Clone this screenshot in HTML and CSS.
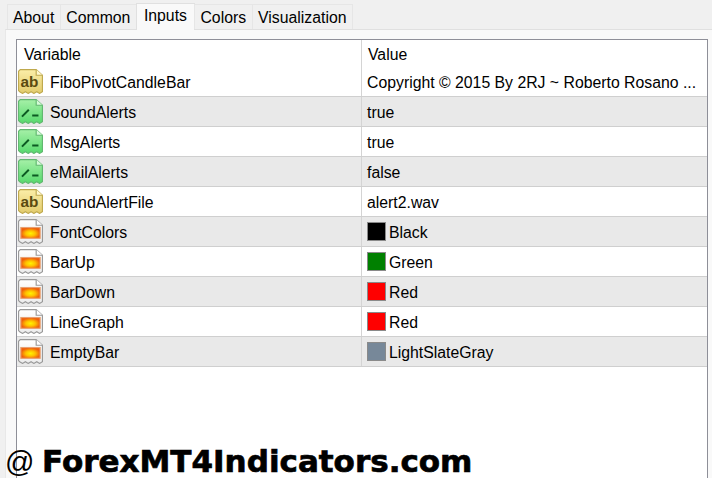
FILE: index.html
```html
<!DOCTYPE html>
<html lang="en">
<head>
<meta charset="utf-8">
<title>Inputs</title>
<link rel="stylesheet" href="styles.css">
</head>
<body>
<svg class="defs" width="0" height="0" aria-hidden="true">
  <defs>
    <linearGradient id="gy" x1="0" y1="0" x2="0" y2="1"><stop offset="0" stop-color="#fbeea8"/><stop offset="1" stop-color="#e2cb6c"/></linearGradient>
    <linearGradient id="gg" x1="0" y1="0" x2="0" y2="1"><stop offset="0" stop-color="#a6f0a8"/><stop offset="1" stop-color="#56d96c"/></linearGradient>
    <linearGradient id="gw" x1="0" y1="0" x2="0" y2="1"><stop offset="0" stop-color="#ffffff"/><stop offset="1" stop-color="#ececec"/></linearGradient>
    <radialGradient id="gf" cx=".5" cy=".55" r=".5"><stop offset="0" stop-color="#fff200"/><stop offset=".5" stop-color="#ffc000"/><stop offset="1" stop-color="#f0600c"/></radialGradient>
    <symbol id="i-text" viewBox="1 1 22 22">
      <path d="M3 1.5H17L22.5 6.5V21L20 22.5 17.5 21 15 22.5 12.5 21 10 22.5 7.5 21 5 22.5 2.5 21 1.5 20V3Z" fill="url(#gy)" stroke="#bfa94e"/>
      <path d="M17 1.5V6.5H22.5" fill="#fff8d0" stroke="#bfa94e"/>
      <text x="3.2" y="17" class="ab">ab</text>
    </symbol>
    <symbol id="i-bool" viewBox="1 1 22 22">
      <path d="M3 1.5H17L22.5 6.5V21L20 22.5 17.5 21 15 22.5 12.5 21 10 22.5 7.5 21 5 22.5 2.5 21 1.5 20V3Z" fill="url(#gg)" stroke="#62b870"/>
      <path d="M17 1.5V6.5H22.5" fill="#d6fbd8" stroke="#62b870"/>
      <path d="M4.5 16.5 10.5 10.5M13.5 15.5H19" fill="none" stroke="#0c5a22" stroke-width="1.8"/>
    </symbol>
    <symbol id="i-color" viewBox="1 1 22 22">
      <path d="M3 1.5H17L22.5 6.5V21L20 22.5 17.5 21 15 22.5 12.5 21 10 22.5 7.5 21 5 22.5 2.5 21 1.5 20V3Z" fill="url(#gw)" stroke="#999"/>
      <path d="M17 1.5V6.5H22.5" fill="#fff" stroke="#999"/>
      <rect x="3.5" y="8.5" width="17" height="9.5" fill="url(#gf)" stroke="#e8a070"/>
    </symbol>
  </defs>
</svg>

<nav class="tabs">
  <span class="tab">About</span>
  <span class="tab">Common</span>
  <span class="tab tab-active">Inputs</span>
  <span class="tab">Colors</span>
  <span class="tab">Visualization</span>
</nav>

<main class="panel">
  <section class="list">
    <header class="row head">
      <div class="cell var">Variable</div>
      <div class="cell val">Value</div>
    </header>
    <div class="row"><div class="cell var"><svg class="icon"><use href="#i-text"/></svg>FiboPivotCandleBar</div><div class="cell val">Copyright © 2015 By 2RJ ~ Roberto Rosano ...</div></div>
    <div class="row alt"><div class="cell var"><svg class="icon"><use href="#i-bool"/></svg>SoundAlerts</div><div class="cell val">true</div></div>
    <div class="row"><div class="cell var"><svg class="icon"><use href="#i-bool"/></svg>MsgAlerts</div><div class="cell val">true</div></div>
    <div class="row alt"><div class="cell var"><svg class="icon"><use href="#i-bool"/></svg>eMailAlerts</div><div class="cell val">false</div></div>
    <div class="row"><div class="cell var"><svg class="icon"><use href="#i-text"/></svg>SoundAlertFile</div><div class="cell val">alert2.wav</div></div>
    <div class="row alt"><div class="cell var"><svg class="icon"><use href="#i-color"/></svg>FontColors</div><div class="cell val"><span class="swatch black"></span>Black</div></div>
    <div class="row"><div class="cell var"><svg class="icon"><use href="#i-color"/></svg>BarUp</div><div class="cell val"><span class="swatch green"></span>Green</div></div>
    <div class="row alt"><div class="cell var"><svg class="icon"><use href="#i-color"/></svg>BarDown</div><div class="cell val"><span class="swatch red"></span>Red</div></div>
    <div class="row"><div class="cell var"><svg class="icon"><use href="#i-color"/></svg>LineGraph</div><div class="cell val"><span class="swatch red"></span>Red</div></div>
    <div class="row alt"><div class="cell var"><svg class="icon"><use href="#i-color"/></svg>EmptyBar</div><div class="cell val"><span class="swatch slate"></span>LightSlateGray</div></div>
  </section>
</main>

<div class="mark"><span class="at">@</span><span class="site">ForexMT4Indicators.com</span></div>
</body>
</html>
```

FILE: styles.css
```css
* { box-sizing: border-box; }
html, body { margin: 0; height: 100%; }
body {
  width: 712px;
  height: 478px;
  overflow: hidden;
  position: relative;
  background: #f0f0f0;
  font-family: "Liberation Sans", Arial, sans-serif;
  font-size: 15.8px;
  color: #000;
  display: flex;
  flex-direction: column;
}
.defs { position: absolute; }
.ab { font-family: "Liberation Sans", sans-serif; font-size: 13.5px; font-weight: 700; fill: #5a4a10; }

.tabs {
  height: 29px;
  padding: 0 0 0 6.5px;
  display: flex;
  align-items: flex-end;
  flex: none;
  position: relative;
  z-index: 1;
}
.tab {
  height: 25px;
  padding: 0 5.5px;
  line-height: 26px;
  background: #f0f0f0;
  border: 1px solid #e6e6e6;
  border-bottom: 0;
  margin-right: -1px;
  white-space: nowrap;
}
.tab-active {
  height: 27px;
  margin-bottom: -1px;
  padding: 0 7px;
  line-height: 23px;
  background: #f9f9f9;
  border-color: #e0e0e0;
}

.panel {
  flex: 1;
  margin-left: 5px;
  padding: 9px 4px 0 10px;
  background: #f9f9f9;
  border-top: 1px solid #e0e0e0;
  border-left: 1px solid #e8e8e8;
}
.list {
  height: 100%;
  background: #fff;
  border: 1px solid #8e8f98;
  border-bottom: 0;
}
.row {
  height: 30px;
  display: grid;
  grid-template-columns: 344px 1fr;
  border-bottom: 1px solid #cfcfcf;
}
.head { height: 27px; border-bottom: 0; }
.alt { background: #e9e9e9; }
.cell {
  display: flex;
  align-items: center;
  padding-top: 2px;
  white-space: nowrap;
}
.var { padding-left: 1px; }
.val { border-left: 1px solid #d4d4d4; padding-left: 5px; }
.head .var { padding-left: 7px; }
.head .val { padding-left: 6px; }
.icon { width: 25px; height: 25px; margin: -2px 7px 0 0; flex: none; }
.swatch {
  width: 19px;
  height: 19px;
  margin: -2px 3px 0 0;
  border: 1px solid #8a8a8a;
  flex: none;
}
.black { background: #000; }
.green { background: #008000; }
.red { background: #ff0000; }
.slate { background: #778899; }

.mark {
  position: absolute;
  left: 5px;
  top: 442px;
  display: flex;
  align-items: baseline;
  font-family: "DejaVu Sans", sans-serif;
  font-weight: 700;
  font-size: 31px;
  line-height: 38px;
  color: #000;
  white-space: nowrap;
}
.at {
  width: 37px;
  font-family: "Liberation Sans", sans-serif;
  font-weight: 400;
  font-size: 29px;
}
.site { -webkit-text-stroke: 0.7px #000; }
```
